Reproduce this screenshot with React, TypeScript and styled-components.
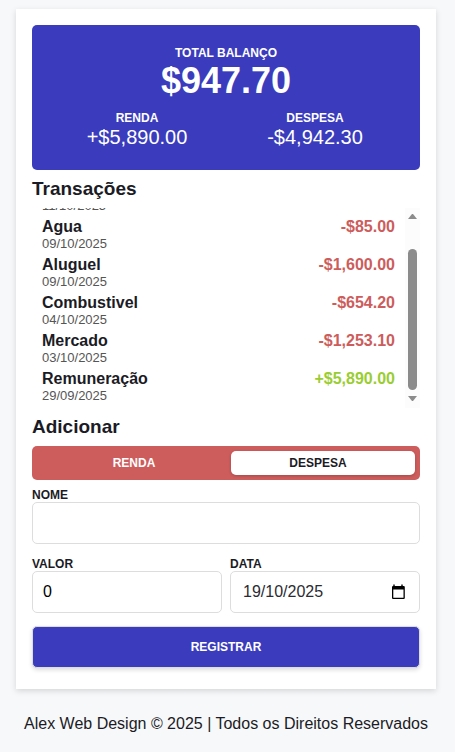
import React, { useEffect, useRef, useState } from "react";
import styled, { createGlobalStyle } from "styled-components";

const GlobalStyle = createGlobalStyle`
  * { box-sizing: border-box; }
  body {
    margin: 0;
    background: #f7f8fa;
    color: #1b1b25;
    font-family: "Liberation Sans", Arial, sans-serif;
    font-size: 16px;
    line-height: 18px;
  }
  h2, p, dl, dt, dd, ul { margin: 0; padding: 0; }
  button, input { font-family: inherit; }
`;

const Page = styled.div`
  padding: 9px 19px 0 16px;
`;

const Card = styled.main`
  padding: 16px 16px 21px;
  background: #fff;
  box-shadow: 0 2px 6px rgba(0, 0, 0, 0.14);
`;

const Balance = styled.section`
  display: flex;
  flex-direction: column;
  gap: 9px;
  padding: 21px 16px;
  border-radius: 5px;
  background: #3a3cbd;
  color: #fff;
  text-align: center;
`;

const BalanceRow = styled.dl`
  display: grid;
  grid-auto-flow: column;
  grid-auto-columns: 1fr;
`;

const Caption = styled.dt`
  font-size: 12px;
  line-height: 14px;
  font-weight: 700;
`;

const Figure = styled.dd<{ $large?: boolean }>`
  font-size: ${(p) => (p.$large ? 36 : 20)}px;
  line-height: ${(p) => (p.$large ? 42 : 24)}px;
  font-weight: ${(p) => (p.$large ? 700 : 400)};
`;

const Heading = styled.h2`
  font-size: 19px;
  line-height: 22px;
  font-weight: 700;
`;

const Transactions = styled.section`
  display: flex;
  flex-direction: column;
  gap: 8px;
  padding-top: 8px;
`;

const ScrollArea = styled.div`
  display: flex;
  height: 200px;
`;

const List = styled.ul`
  flex: 1;
  && { padding: 7px 10px 0; }
  overflow-y: auto;
  scrollbar-width: none;
  list-style: none;
`;

const Item = styled.li`
  display: flex;
  justify-content: space-between;
  align-items: flex-start;
  height: 38px;
`;

const Name = styled.p`
  min-height: 18px;
  font-weight: 700;
`;

const Day = styled.p`
  color: #555;
  font-size: 13px;
  line-height: 16px;
`;

const Amount = styled.span<{ $income: boolean }>`
  font-weight: 700;
  color: ${(p) => (p.$income ? "yellowgreen" : "indianred")};
`;

const ScrollBar = styled.div`
  display: flex;
  flex-direction: column;
  align-items: center;
  width: 15px;
  background: #fcfcfc;
`;

const ScrollButton = styled.button`
  display: block;
  width: 15px;
  height: 17px;
  padding: 0;
  border: 0;
  background: none;
  svg { display: block; }
`;

const Track = styled.div`
  flex: 1;
  width: 9px;
`;

const Thumb = styled.div`
  border-radius: 5px;
  background: #8b8b8b;
`;

const Form = styled.form`
  display: flex;
  flex-direction: column;
  padding-top: 8px;
`;

const Switch = styled.div`
  display: grid;
  grid-template-columns: 1fr 1fr;
  gap: 10px;
  margin: 8px 0;
  padding: 5px;
  border-radius: 5px;
  background: indianred;
`;

const Choice = styled.button<{ $active?: boolean }>`
  height: 24px;
  padding: ${(p) => (p.$active ? "0 10px 0 0" : "0 0 0 10px")};
  border: 0;
  border-radius: 5px;
  background: ${(p) => (p.$active ? "#fff" : "transparent")};
  color: ${(p) => (p.$active ? "#1b1b25" : "#fff")};
  box-shadow: ${(p) => (p.$active ? "0 1px 3px rgba(0, 0, 0, 0.2)" : "none")};
  font-size: 12px;
  font-weight: 700;
`;

const Fields = styled.div`
  display: grid;
  grid-template-columns: 1fr 1fr;
  gap: 8px;
  margin-top: 13px;
`;

const Field = styled.div`
  display: flex;
  flex-direction: column;
  min-width: 0;
`;

const Label = styled.label`
  font-size: 12px;
  line-height: 14px;
  font-weight: 700;
`;

const InputBox = styled.div`
  display: flex;
  align-items: center;
  height: 42px;
  border: 1px solid #ddd;
  border-radius: 5px;
`;

const Input = styled.input<{ $muted?: boolean }>`
  flex: 1;
  min-width: 0;
  height: 100%;
  padding: 0 ${(p) => (p.$muted ? 12 : 10)}px;
  border: 0;
  border-radius: 5px;
  outline: 0;
  background: none;
  color: ${(p) => (p.$muted ? "#2b2b33" : "#000")};
  font-size: 16px;
`;

const CalendarButton = styled.button`
  display: flex;
  padding: 0;
  margin-right: 12px;
  border: 0;
  background: none;
`;

const Submit = styled.button`
  height: 42px;
  margin-top: 13px;
  border: 1px solid #ddd;
  border-radius: 5px;
  background: #3a3cbd;
  color: #fff;
  box-shadow: 0 2px 4px rgba(0, 0, 0, 0.14);
  font-size: 12px;
  font-weight: 700;
`;

const Footer = styled.footer`
  padding: 26px 0 19px;
  text-align: center;
  white-space: nowrap;
`;

const transactions = [
  { name: "", day: "11/10/2025", amount: "" },
  { name: "Agua", day: "09/10/2025", amount: "-$85.00" },
  { name: "Aluguel", day: "09/10/2025", amount: "-$1,600.00" },
  { name: "Combustivel", day: "04/10/2025", amount: "-$654.20" },
  { name: "Mercado", day: "03/10/2025", amount: "-$1,253.10" },
  { name: "Remuneração", day: "29/09/2025", amount: "+$5,890.00" },
];

function TransactionList() {
  const list = useRef<HTMLUListElement>(null);
  const [thumb, setThumb] = useState({ size: 0, offset: 0 });

  const measure = () => {
    const el = list.current;
    if (!el) return;
    const track = el.clientHeight - 34;
    const ratio = track / el.scrollHeight;
    setThumb({
      size: Math.round(el.clientHeight * ratio),
      offset: Math.floor(el.scrollTop * ratio),
    });
  };

  const scrollBy = (top: number) => list.current?.scrollBy({ top });

  useEffect(() => {
    if (list.current) list.current.scrollTop = list.current.scrollHeight;
    measure();
  }, []);

  return (
    <ScrollArea>
      <List ref={list} onScroll={measure}>
        {transactions.map((t, i) => (
          <Item key={i}>
            <div>
              <Name>{t.name}</Name>
              <Day>{t.day}</Day>
            </div>
            <Amount $income={t.amount.startsWith("+")}>{t.amount}</Amount>
          </Item>
        ))}
      </List>
      <ScrollBar>
        <ScrollButton type="button" aria-label="Subir" onClick={() => scrollBy(-38)}>
          <svg width="15" height="17" viewBox="0 0 15 17">
            <path d="M3 11 L7 6 H8 L12 11 Z" fill="#8b8b8b" />
          </svg>
        </ScrollButton>
        <Track>
          <Thumb style={{ height: thumb.size, marginTop: thumb.offset }} />
        </Track>
        <ScrollButton type="button" aria-label="Descer" onClick={() => scrollBy(38)}>
          <svg width="15" height="17" viewBox="0 0 15 17">
            <path d="M3 5 L7 10 H8 L12 5 Z" fill="#8b8b8b" />
          </svg>
        </ScrollButton>
      </ScrollBar>
    </ScrollArea>
  );
}

export default function App() {
  return (
    <Page>
      <GlobalStyle />
      <Card>
        <Balance>
          <BalanceRow>
            <div>
              <Caption>TOTAL BALANÇO</Caption>
              <Figure $large>$947.70</Figure>
            </div>
          </BalanceRow>
          <BalanceRow>
            <div>
              <Caption>RENDA</Caption>
              <Figure>+$5,890.00</Figure>
            </div>
            <div>
              <Caption>DESPESA</Caption>
              <Figure>-$4,942.30</Figure>
            </div>
          </BalanceRow>
        </Balance>
        <Transactions>
          <Heading>Transações</Heading>
          <TransactionList />
        </Transactions>
        <Form onSubmit={(e) => e.preventDefault()}>
          <Heading>Adicionar</Heading>
          <Switch>
            <Choice type="button">RENDA</Choice>
            <Choice type="button" $active>DESPESA</Choice>
          </Switch>
          <Field>
            <Label htmlFor="name">NOME</Label>
            <InputBox>
              <Input id="name" type="text" />
            </InputBox>
          </Field>
          <Fields>
            <Field>
              <Label htmlFor="value">VALOR</Label>
              <InputBox>
                <Input id="value" type="text" inputMode="decimal" defaultValue="0" />
              </InputBox>
            </Field>
            <Field>
              <Label htmlFor="date">DATA</Label>
              <InputBox>
                <Input id="date" type="text" $muted defaultValue="19/10/2025" />
                <CalendarButton type="button" aria-label="Abrir calendário">
                  <svg width="16" height="16" viewBox="0 0 16 16">
                    <path
                      d="M2.3 .6h1.4v1.4h6.6V.6h1.4v1.4h1q1.1 0 1.1 1.1v10.8q0 1.1-1.1 1.1H2.1q-1.1 0-1.1-1.1V3.1q0-1.1 1.1-1.1h.2ZM2.3 5.4v8.4h10.2V5.4Z"
                      fill="#000"
                      fillRule="evenodd"
                    />
                  </svg>
                </CalendarButton>
              </InputBox>
            </Field>
          </Fields>
          <Submit type="submit">REGISTRAR</Submit>
        </Form>
      </Card>
      <Footer>Alex Web Design © 2025 | Todos os Direitos Reservados</Footer>
    </Page>
  );
}
